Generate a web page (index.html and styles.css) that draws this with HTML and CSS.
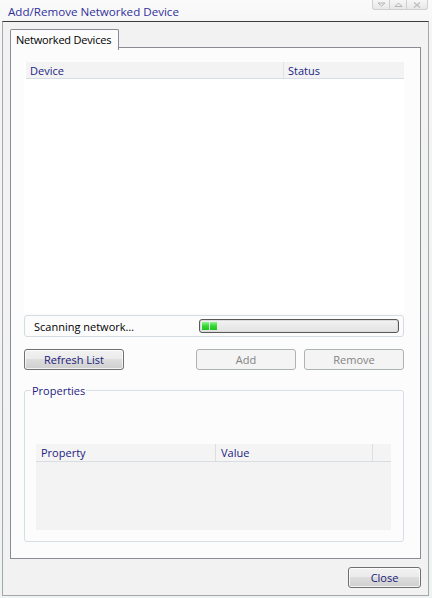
FILE: index.html
```html
<!DOCTYPE html>
<html>
<head>
<meta charset="utf-8">
<link rel="stylesheet" href="styles.css">
</head>
<body>
<div class="frame">
  <div class="titlebar">
    <div class="title">Add/Remove Networked Device</div>
    <div class="caption">
      <span class="cbtn"><svg width="9" height="5" viewBox="0 0 9 5"><path d="M1 1h7L4.5 4z" fill="none" stroke="#b5b5b5"/></svg></span>
      <span class="cbtn"><svg width="9" height="5" viewBox="0 0 9 5"><path d="M1 4.5h7L4.5 1z" fill="none" stroke="#b5b5b5"/></svg></span>
      <span class="cbtn"><svg width="8" height="6" viewBox="0 0 8 6"><path d="M1 0.5l6 5M7 0.5l-6 5" stroke="#c0c0c0" stroke-width="1.4"/></svg></span>
    </div>
  </div>
  <div class="client">
    <div class="tabs">
      <div class="tab">Networked Devices</div>
    </div>
    <div class="panel">
      <div class="list">
        <div class="lhead">
          <div class="col col-device">Device</div>
          <div class="col col-status">Status</div>
        </div>
        <div class="lbody"></div>
      </div>
      <div class="statusbox">
        <span class="stext">Scanning network…</span>
        <div class="progress"><span class="chunk"></span><span class="chunk"></span></div>
      </div>
      <div class="actions">
        <button class="btn btn-wide">Refresh List</button>
        <div class="spacer"></div>
        <button class="btn btn-wide disabled">Add</button>
        <button class="btn btn-wide disabled">Remove</button>
      </div>
      <fieldset class="group">
        <legend>Properties</legend>
        <div class="plist">
          <div class="phead">
            <div class="col col-prop">Property</div>
            <div class="col col-val">Value</div>
            <div class="col col-rest"></div>
          </div>
          <div class="pbody"></div>
        </div>
      </fieldset>
    </div>
    <div class="footer">
      <button class="btn btn-close">Close</button>
    </div>
  </div>
</div>
</body>
</html>
```
FILE: styles.css
```css
html, body {
  margin: 0;
  padding: 0;
}
body {
  width: 432px;
  height: 598px;
  overflow: hidden;
  font-family: "Open Sans", "Liberation Sans", sans-serif;
  font-size: 11px;
}
.frame {
  width: 432px;
  height: 598px;
  box-sizing: border-box;
  padding: 0 3px 2px 2px;
  display: flex;
  flex-direction: column;
  background: linear-gradient(#fafafa, #f4f4f4 40px, #eef3f3);
}
.titlebar {
  height: 21px;
  display: flex;
  align-items: flex-start;
  flex-shrink: 0;
}
.title {
  padding: 4px 0 0 6px;
  font-size: 11.6px;
  color: #30309c;
  line-height: 16px;
}
.caption {
  margin-left: auto;
  margin-right: 1px;
  display: flex;
}
.cbtn {
  width: 16px;
  height: 9px;
  border: 1px solid #cfcfcf;
  border-top: none;
  border-left-width: 0;
  background: linear-gradient(#f6f6f6, #e8e8e8);
  display: flex;
  align-items: center;
  justify-content: center;
}
.cbtn:first-child {
  border-left-width: 1px;
  border-bottom-left-radius: 3px;
}
.cbtn:last-child {
  border-bottom-right-radius: 3px;
  width: 20px;
}
.client {
  flex: 1;
  border: 1px solid #a7a7a7;
  border-top-color: #3c3c3c;
  background: #f2f2f2;
  padding: 7px 7px 7px 7px;
  display: flex;
  flex-direction: column;
}
.tabs {
  display: flex;
  height: 19px;
  position: relative;
  z-index: 1;
  margin-bottom: -1px;
}
.tab {
  border: 1px solid #898c95;
  border-bottom: none;
  background: #fcfcfc;
  border-radius: 2px 2px 0 0;
  padding: 0 7px 0 5px;
  line-height: 20px;
  height: 20px;
  color: #000;
  font-size: 11px;
  letter-spacing: -0.2px;
}
.panel {
  flex: 1;
  border: 1px solid #898c95;
  background: #fcfcfc;
  padding: 14px 16px 16px 13px;
  display: flex;
  flex-direction: column;
}
.list {
  background: #fff;
  height: 251px;
  display: flex;
  flex-direction: column;
  padding-left: 2px;
}
.lhead {
  display: flex;
  height: 16px;
  background: #f3f3f3;
  border-bottom: 1px solid #d5dee3;
  color: #1c1c82;
}
.col {
  line-height: 18px;
  padding-left: 4px;
  box-sizing: border-box;
}
.col-device {
  width: 258px;
  border-right: 1px solid #dfe3e6;
}
.col-status {
  flex: 1;
}
.statusbox {
  margin-top: 2px;
  height: 22px;
  box-sizing: border-box;
  border: 1px solid #d3dce3;
  border-radius: 3px;
  display: flex;
  align-items: center;
  padding: 0 4px 0 9px;
}
.stext {
  flex: 1;
  color: #000;
}
.progress {
  width: 200px;
  height: 14px;
  box-sizing: border-box;
  border: 1px solid #585858;
  border-radius: 3px;
  background: linear-gradient(#f3f3f3, #e2e2e2);
  box-shadow: inset 0 0 0 1px #dcdcdc;
  display: flex;
  align-items: center;
  padding: 0 2px;
  gap: 1px;
}
.chunk {
  width: 7px;
  height: 8px;
  background: linear-gradient(#8ff58f, #35d635 50%, #21c421);
}
.actions {
  margin-top: 12px;
  display: flex;
  gap: 8px;
}
.spacer {
  flex: 1;
}
.btn {
  font-family: inherit;
  font-size: 11px;
  height: 21px;
  box-sizing: border-box;
  border: 1px solid #707070;
  border-radius: 3px;
  color: #19197a;
  background: linear-gradient(#f2f2f2 0%, #ebebeb 45%, #dddddd 50%, #cfcfcf 100%);
  box-shadow: inset 0 0 0 1px rgba(255, 255, 255, 0.75);
  padding: 0;
  margin: 0;
}
.btn-wide {
  width: 100px;
}
.btn.disabled {
  background: #f4f4f4;
  border-color: #adb2b5;
  color: #838383;
  box-shadow: none;
}
.group {
  margin: 13px 0 0 0;
  border: 1px solid #d5dfe5;
  border-radius: 3px;
  padding: 0 12px 11px 11px;
  flex: 1;
  min-width: 0;
  display: flex;
  flex-direction: column;
}
.group legend {
  padding: 0 1px;
  margin-left: -5px;
  color: #1c1c82;
  line-height: 15px;
}
.plist {
  margin-top: 46px;
  flex: 1;
  background: #f3f3f3;
  display: flex;
  flex-direction: column;
}
.phead {
  display: flex;
  height: 17px;
  border-bottom: 1px solid #d8dde1;
  color: #1c1c82;
  background: #f4f4f4;
}
.phead .col {
  line-height: 18px;
  padding-left: 5px;
}
.col-prop {
  width: 180px;
  border-right: 1px solid #dadfe2;
}
.col-val {
  width: 157px;
  border-right: 1px solid #dadfe2;
}
.col-rest {
  flex: 1;
}
.pbody {
  flex: 1;
}
.footer {
  display: flex;
  justify-content: flex-end;
  padding-top: 8px;
}
.btn-close {
  width: 73px;
}
```
